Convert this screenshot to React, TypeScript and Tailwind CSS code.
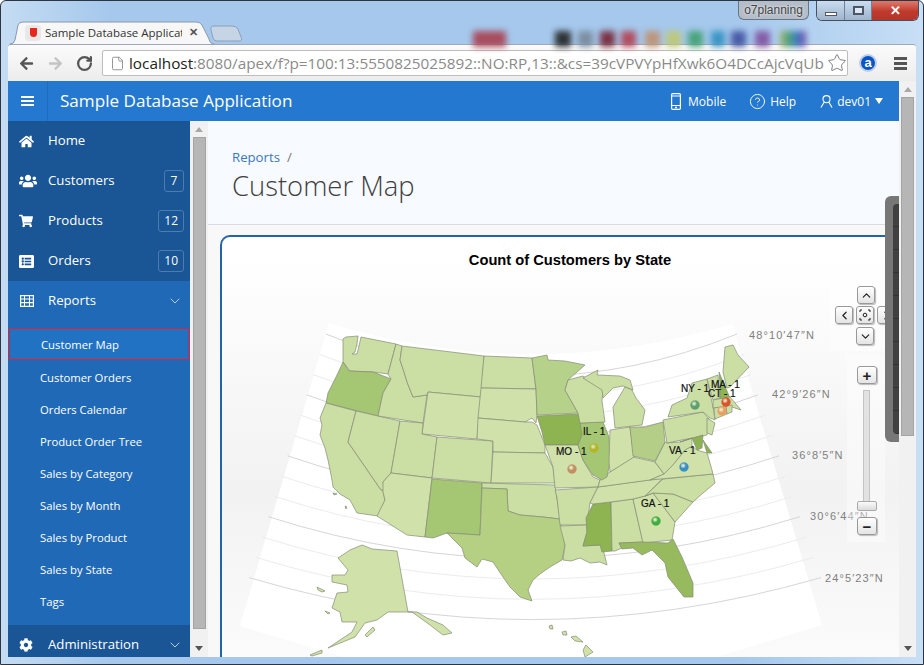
import React from "react";
import { ChevronDown, ChevronLeft, ChevronRight, ChevronUp, CircleHelp, File, RotateCw, Star } from "lucide-react";
import { FaArrowLeft, FaArrowRight, FaCog, FaHome, FaListAlt, FaShoppingCart, FaUsers } from "react-icons/fa";

const LIGHT = "#d0e1aa";
const PALE = "#cbdea3";
const MID = "#a5c673";
const DARK = "#8db451";

// map shapes, coordinates are taken straight from the page
const states: { p: string; f: string }[] = [
  { f: PALE, p: "343,339 346,337 358,336 357,344 355,352 352,354 357,354 359,346 361,337 396,344 388,374 373,372 350,371 343,362 343,353" },
  { f: MID, p: "343,362 349,371 373,372 391,379 383,393 378,416 326,403 328,393 337,375" },
  { f: PALE, p: "326,403 356,411 348,442 381,490 384,490 383,492 385,500 378,516 357,513 350,500 340,494 333,487 332,480 328,460 325,448 320,435 322,425 320,418" },
  { f: PALE, p: "356,411 400,421 391,473 383,482 384,490 381,490 348,442" },
  { f: PALE, p: "396,344 402,346 400,360 404,372 407,382 413,397 427,395 423,423 378,416 383,393 391,379 388,374" },
  { f: PALE, p: "402,346 484,356 481,397 428,392 427,395 413,397 407,382 404,372 400,360" },
  { f: LIGHT, p: "428,392 481,397 477,439 422,434" },
  { f: PALE, p: "400,421 423,423 422,434 437,437 432,478 391,473" },
  { f: PALE, p: "437,437 493,441 491,483 432,478" },
  { f: LIGHT, p: "391,473 432,478 425,537 407,535 377,516 385,500 383,492 383,482" },
  { f: MID, p: "432,479 482,483 480,535 447,533 433,538 425,537" },
  { f: PALE, p: "484,356 532,358 536,389 481,388" },
  { f: LIGHT, p: "481,388 536,389 537,415 536,423 532,418 525,422 478,418" },
  { f: LIGHT, p: "478,418 525,422 532,422 537,425 545,445 545,453 493,452 493,441 477,439" },
  { f: LIGHT, p: "493,452 545,453 553,467 555,483 491,483" },
  { f: PALE, p: "482,483 555,485 557,498 560,519 543,517 520,515 508,511 507,489 482,488" },
  { f: "#b5d083", p: "482,488 507,489 508,511 520,515 543,517 560,519 565,545 562,560 550,567 540,574 533,580 528,590 532,601 520,597 510,587 503,577 493,562 482,559 477,567 465,558 462,548 447,533 480,535" },
  { f: "#b6d18a", p: "532,358 547,355 548,360 565,361 585,365 568,380 565,390 578,413 537,415 536,389" },
  { f: DARK, p: "537,416 578,414 583,425 582,435 578,445 545,445 542,432" },
  { f: LIGHT, p: "545,445 578,445 583,460 593,477 600,480 598,487 555,488 553,467" },
  { f: PALE, p: "555,490 598,487 590,503 587,525 560,525 557,498" },
  { f: PALE, p: "560,526 587,525 587,532 583,546 602,545 604,553 607,565 600,562 590,563 580,558 571,561 563,560 565,545" },
  { f: DARK, p: "593,504 611,502 612,551 602,552 600,545 583,546 587,532 586,518" },
  { f: PALE, p: "611,502 633,499 643,542 619,543 622,548 615,551 612,551" },
  { f: LIGHT, p: "633,499 645,496 653,493 675,522 672,540 643,543" },
  { f: "#97ba5e", p: "619,543 643,542 668,543 673,539 682,557 693,583 693,597 684,597 668,577 665,563 652,550 642,555 633,548 622,549" },
  { f: PALE, p: "645,496 653,493 673,494 693,502 675,522 653,493" },
  { f: PALE, p: "663,479 713,474 715,483 703,493 693,502 673,494 653,493 645,496" },
  { f: LIGHT, p: "598,487 663,478 645,496 633,499 611,502 593,504 590,503" },
  { f: LIGHT, p: "600,480 610,472 633,457 655,462 664,474 650,480 598,487" },
  { f: LIGHT, p: "650,480 664,474 672,466 685,450 692,446 697,450 707,453 712,470 713,474" },
  { f: PALE, p: "655,462 665,442 667,443 680,442 692,438 692,446 685,450 672,466 664,474" },
  { f: MID, p: "580,423 603,422 609,437 610,462 607,477 602,480 593,475 583,460 578,445 582,435" },
  { f: PALE, p: "568,380 583,376 603,390 602,401 605,422 580,423 578,413 565,390" },
  { f: PALE, p: "583,378 598,370 597,375 620,376 630,380 633,390 623,386 613,388 603,398 602,390" },
  { f: PALE, p: "615,428 613,407 625,387 632,390 636,398 645,410 642,425" },
  { f: LIGHT, p: "610,430 630,427 634,457 610,472 609,462" },
  { f: "#b5ce87", p: "630,427 645,427 663,422 665,442 655,461 633,456" },
  { f: PALE, p: "663,420 703,412 710,420 707,435 667,443" },
  { f: PALE, p: "668,417 672,405 687,398 692,383 707,379 713,407 715,420 710,418 703,412" },
  { f: PALE, p: "707,418 715,423 712,435 707,433" },
  { f: PALE, p: "707,379 718,375 720,398 713,400" },
  { f: DARK, p: "719,372 730,398 720,399 720,383" },
  { f: PALE, p: "723,372 725,347 733,345 738,355 749,367 730,387 727,388" },
  { f: PALE, p: "713,400 730,397 741,410 732,407 713,408" },
  { f: PALE, p: "714,408 726,406 727,414 715,419" },
  { f: PALE, p: "726,406 732,405 732,412 727,414" },
  { f: DARK, p: "680,442 703,435 702,448 697,450 692,438" },
  { f: DARK, p: "703,440 712,453 707,453" },
  { f: LIGHT, p: "338,558 350,550 362,545 372,549 397,551 408,612 417,612 427,618 443,625 452,633 443,635 430,625 412,612 388,612 377,620 365,623 355,637 328,648 352,632 357,622 342,622 340,612 332,608 337,593 348,592 347,585 332,582 332,575 345,575 348,570" },
  { f: LIGHT, p: "365,635 373,627 375,630 367,637" },
  { f: LIGHT, p: "317,587 325,591 322,592 318,590" },
  { f: LIGHT, p: "325,611 330,613 328,614" },
  { f: LIGHT, p: "310,655 322,650 322,653 312,656" },
  { f: LIGHT, p: "583,650 586,645 593,652 585,657" },
  { f: LIGHT, p: "571,637 576,636 583,642 575,641" },
  { f: LIGHT, p: "562,632 566,631 567,635 563,635" },
  { f: LIGHT, p: "549,626 552,625 553,629 550,629" },
  { f: LIGHT, p: "333,493 337,494 334,495" },
  { f: LIGHT, p: "345,506 347,507 346,509" },
];

const markers = [
  { x: 695, y: 405, c: "#5f9e6e" },
  { x: 726, y: 402, c: "#d9542b" },
  { x: 722, y: 411, c: "#e8a060" },
  { x: 594, y: 448, c: "#b5b52a" },
  { x: 572, y: 469, c: "#c09060" },
  { x: 684, y: 467, c: "#3a8fc0" },
  { x: 656, y: 521, c: "#3fae3f" },
];

const stateLabels = [
  { x: 583, y: 435, t: "IL - 1" },
  { x: 556, y: 455, t: "MO - 1" },
  { x: 681, y: 392, t: "NY - 1" },
  { x: 711, y: 388, t: "MA - 1" },
  { x: 708, y: 397, t: "CT - 1" },
  { x: 669, y: 454, t: "VA - 1" },
  { x: 641, y: 507, t: "GA - 1" },
];

const latLabels = [
  { x: 749, y: 339, t: "48°10′47″N" },
  { x: 772, y: 398, t: "42°9′26″N" },
  { x: 792, y: 459, t: "36°8′5″N" },
  { x: 810, y: 520, t: "30°6′44″N" },
  { x: 825, y: 582, t: "24°5′23″N" },
];

const blobs = [
  "left-[465px] w-[33px] bg-[#a8404f]",
  "left-[547px] w-[16px] bg-[#222222]",
  "left-[570px] w-[15px] bg-[#778899]",
  "left-[592px] w-[15px] bg-[#772233]",
  "left-[613px] w-[15px] bg-[#b34050]",
  "left-[637px] w-[15px] bg-[#c09070]",
  "left-[658px] w-[15px] bg-[#c0c870]",
  "left-[680px] w-[15px] bg-[#40a070]",
  "left-[703px] w-[14px] bg-[#3090c0]",
  "left-[723px] w-[15px] bg-[#4050a0]",
  "left-[747px] w-[15px] bg-[#8050a0]",
  "left-[772px] w-[26px] bg-[linear-gradient(to_right,#b0b060,#40a070,#3070c0,#8040a0)]",
];

const mainNav = [
  { label: "Home", icon: <FaHome size={15} /> },
  { label: "Customers", icon: <FaUsers size={18} />, badge: "7" },
  { label: "Products", icon: <FaShoppingCart size={14} />, badge: "12" },
  { label: "Orders", icon: <FaListAlt size={15} />, badge: "10" },
];

const subNav = ["Customer Orders", "Orders Calendar", "Product Order Tree", "Sales by Category", "Sales by Month", "Sales by Product", "Sales by State", "Tags"];

function TabStrip() {
  return (
    <div className="relative h-[43px] shrink-0">
      {blobs.map((b) => (
        <div key={b} className={`absolute top-[30px] h-[16px] blur-[3px] opacity-90 ${b}`}></div>
      ))}
      <div className="absolute left-[2px] top-[19px] w-[236px] h-[25px]">
        <svg className="absolute inset-0" width="236" height="25" viewBox="0 0 236 25">
          <path d="M207 21 L229 21 Q233 21 231 17 L228 9 Q226 6 222 6 L204 6 Q200 6 201 10 L203 18 Q204 21 207 21 Z" fill="#c6d5e6" stroke="#8ba0b8" />
          <path d="M0 24 Q4 24 5 20 L8 5 Q9 2 13 2 L186 2 Q190 2 192 5 L199 19 Q200 24 204 24" fill="#f7f7f7" stroke="#8c98a8" />
        </svg>
        <div className="relative flex items-center h-[25px] pl-[15px]">
          <div className="w-4 h-4 bg-[#e8e8e8] rounded-sm flex items-center justify-center shrink-0">
            <div className="w-[7px] h-[9px] bg-[#e8281c] rounded-b-sm"></div>
          </div>
          <span className="ml-[4px] w-[137px] overflow-hidden whitespace-nowrap text-[11.5px] text-[#333] font-['Open_Sans',sans-serif]">Sample Database Applicat</span>
          <span className="ml-[7px] text-[11px] font-bold text-[#555] font-['Liberation_Sans',sans-serif]">✕</span>
        </div>
      </div>
    </div>
  );
}

function WindowButtons() {
  return (
    <div className="absolute right-[4px] top-0 flex items-start">
      <div className="w-[71px] h-[19px] mr-[7px] rounded-b-md border border-t-0 border-[#6b7684] bg-[#b4bdc8] flex items-center justify-center text-[12px] text-[#444] font-['Liberation_Sans',sans-serif] [text-shadow:0_0_3px_#fff]">o7planning</div>
      <div className="flex h-[20px] rounded-b-md border border-t-0 border-[#47505c] overflow-hidden">
        <div className="w-[28px] bg-[linear-gradient(#c9dcf0,#9fb5cc)] flex items-center justify-center border-r border-[#6f8196]">
          <div className="w-[12px] h-[4px] mt-[6px] bg-white border border-[#556]"></div>
        </div>
        <div className="w-[27px] bg-[linear-gradient(#c9dcf0,#9fb5cc)] flex items-center justify-center border-r border-[#6f8196]">
          <div className="w-[11px] h-[9px] border-2 border-[#4a5566] bg-[#dde8f4]"></div>
        </div>
        <div className="w-[46px] bg-[linear-gradient(#dd7a6e,#c03a2c_55%,#b3352a)] flex items-center justify-center text-white text-[13px] font-bold font-['Liberation_Sans',sans-serif]">✕</div>
      </div>
    </div>
  );
}

function Toolbar() {
  return (
    <div className="h-[37px] shrink-0 flex items-center bg-[linear-gradient(#fbfbfb,#ececec)] border-t border-[#9fa9b5] rounded-t-[3px]">
      <FaArrowLeft size={15} className="ml-[11px] text-[#555]" />
      <FaArrowRight size={15} className="ml-[14px] text-[#c4c4c4]" />
      <RotateCw size={17} strokeWidth={3.2} className="ml-[13px] text-[#555]" />
      <div className="ml-[9px] w-[746px] h-[26px] bg-white border border-[#bdbdbd] rounded-[2px] flex items-center pl-[7px] overflow-hidden">
        <File size={15} strokeWidth={1.4} className="text-[#888] shrink-0" />
        <span className="ml-[4px] w-[697px] overflow-hidden whitespace-nowrap text-[15.3px] text-[#8a8a8a] font-['Open_Sans',sans-serif]">
          <span className="text-[#222]">localhost</span>:8080/apex/f?p=100:13:5550825025892::NO:RP,13::&amp;cs=39cVPVYpHfXwk6O4DCcAjcVqUb
        </span>
        <Star size={20} strokeWidth={1} className="ml-[2px] text-[#666] shrink-0" />
      </div>
      <div className="ml-[11px] w-[18px] h-[18px] rounded-full bg-[#0b55c4] border-2 border-[#bcd0ee] flex items-center justify-center text-white text-[13px] leading-none font-bold font-['Liberation_Sans',sans-serif] pb-[2px]">a</div>
      <div className="ml-[17px] w-[13px] flex flex-col gap-[2px]">
        <div className="h-[3px] bg-[#555]"></div>
        <div className="h-[3px] bg-[#555]"></div>
        <div className="h-[3px] bg-[#555]"></div>
      </div>
    </div>
  );
}

function Header() {
  return (
    <div className="h-10 shrink-0 bg-[#2478d0] text-white flex items-center font-['Open_Sans',sans-serif]">
      <div className="w-[40px] h-full flex flex-col items-center justify-center gap-[2px] border-r border-[#1f6cbd]">
        <div className="w-[13px] h-[2px] bg-white"></div>
        <div className="w-[13px] h-[2px] bg-white"></div>
        <div className="w-[13px] h-[2px] bg-white"></div>
      </div>
      <span className="ml-[12px] text-[17.1px]">Sample Database Application</span>
      <div className="ml-auto flex items-center text-[12px] mr-[16px]">
        <svg width="10" height="17" viewBox="0 0 10 17" fill="none" stroke="#fff" strokeWidth="1.2">
          <rect x="0.6" y="0.6" width="8.8" height="15.8" rx="1.2" />
          <path d="M0.6 3 H9.4 M0.6 12.5 H9.4 M5 13.5 V15.5 M4 14.5 H6" />
        </svg>
        <span className="ml-[7px] pt-[2px]">Mobile</span>
        <CircleHelp size={17} strokeWidth={1.3} className="ml-[23px]" />
        <span className="ml-[4px] pt-[2px]">Help</span>
        <svg className="ml-[24px]" width="13" height="15" viewBox="0 0 14 15" fill="none" stroke="#fff" strokeWidth="1.2">
          <circle cx="7" cy="5" r="3.8" />
          <path d="M4.6 8 L1 14 M9.4 8 L13 14" />
        </svg>
        <span className="ml-[4px] pt-[2px]">dev01</span>
        <div className="ml-[4px] w-0 h-0 border-l-[4px] border-r-[4px] border-t-[6px] border-l-transparent border-r-transparent border-t-white"></div>
      </div>
    </div>
  );
}

function GridIcon() {
  return (
    <svg width="14" height="12" viewBox="0 0 14 12" fill="#fff">
      <path fillRule="evenodd" d="M0 0 H14 V12 H0 Z M1.2 1.2 V3.4 H4 V1.2 Z M5 1.2 V3.4 H9 V1.2 Z M10 1.2 V3.4 H12.8 V1.2 Z M1.2 4.6 V7 H4 V4.6 Z M5 4.6 V7 H9 V4.6 Z M10 4.6 V7 H12.8 V4.6 Z M1.2 8.2 V10.8 H4 V8.2 Z M5 8.2 V10.8 H9 V8.2 Z M10 8.2 V10.8 H12.8 V8.2 Z" />
    </svg>
  );
}

function Sidebar() {
  return (
    <div className="w-[182px] shrink-0 flex flex-col bg-[#2069b6] text-white overflow-hidden font-['Open_Sans',sans-serif]">
      {mainNav.map((n) => (
        <div key={n.label} className="h-10 shrink-0 bg-[#1a5595] flex items-center text-[13.2px]">
          <div className="w-[40px] pl-[11px] shrink-0">{n.icon}</div>
          <span>{n.label}</span>
          {n.badge && (
            <span className="ml-auto mr-[6px] h-[22px] min-w-[20px] px-[5px] rounded-[3px] border border-[#4d7cae] flex items-center justify-center text-[12px] font-medium">{n.badge}</span>
          )}
        </div>
      ))}
      <div className="h-10 shrink-0 flex items-center text-[13.2px]">
        <div className="w-[40px] pl-[12px] shrink-0">
          <GridIcon />
        </div>
        <span>Reports</span>
        <ChevronDown size={16} strokeWidth={1.5} className="ml-auto mr-[7px] text-[#b8cfe8]" />
      </div>
      <div className="h-[7px] shrink-0"></div>
      <div className="h-8 shrink-0 mx-[1px] pt-[2px] bg-[#2272c4] border border-[#e8202c] flex items-center pl-[31px] text-[11.3px] font-medium">Customer Map</div>
      <div className="h-[2px] shrink-0"></div>
      {subNav.map((s) => (
        <div key={s} className="h-8 shrink-0 flex items-center pl-[32px] text-[11.3px] font-medium">{s}</div>
      ))}
      <div className="mt-[7px] h-10 shrink-0 bg-[#1a5595] flex items-center text-[13.2px]">
        <div className="w-[40px] pl-[11px] shrink-0">
          <FaCog size={14} />
        </div>
        <span>Administration</span>
        <ChevronDown size={16} strokeWidth={1.5} className="ml-auto mr-[7px] text-[#b8cfe8]" />
      </div>
    </div>
  );
}

function ScrollBar({ thumb }: { thumb: string }) {
  return (
    <div className="flex-1 flex flex-col items-center bg-[#f1f1f1]">
      <div className="mt-[6px] w-0 h-0 border-l-[4px] border-r-[4px] border-b-[5px] border-l-transparent border-r-transparent border-b-[#a8a8a8]"></div>
      <div className={`mt-[5px] w-[13px] bg-[#b6b6b6] border border-[#a4a4a4] ${thumb}`}></div>
      <div className="mt-auto mb-[6px] w-0 h-0 border-l-[4px] border-r-[4px] border-t-[5px] border-l-transparent border-r-transparent border-t-[#555]"></div>
    </div>
  );
}

function CtrlButton({ className, children }: { className: string; children?: React.ReactNode }) {
  return (
    <div className={`absolute w-[18px] h-[18px] rounded-[3px] border border-[#999] bg-[linear-gradient(#ffffff,#e4e4e4)] shadow-[1px_1px_1px_#bbb] flex items-center justify-center text-[#222] font-['Liberation_Sans',sans-serif] font-bold leading-none ${className}`}>
      {children}
    </div>
  );
}

function MapChart() {
  const lines = Array.from({ length: 13 }, (_, i) => {
    const x0 = 326 - i * 6.4;
    const y0 = 334 + i * 20.3;
    const x1 = 737 + i * 7;
    const y1 = 334 + i * 20.3;
    return { d: `M${x0} ${y0} Q530 ${y0 + 84} ${x1} ${y1}`, strong: i % 3 === 0 };
  });

  return (
    <div className="relative flex-1 min-h-0">
      <svg className="block" width="677" height="382" viewBox="222 275 677 382">
        <defs>
          {markers.map((m, i) => (
            <radialGradient key={i} id={`mk${i}`} cx="40%" cy="35%" r="70%">
              <stop offset="0%" stopColor="#ffffff" stopOpacity="0.6" />
              <stop offset="45%" stopColor={m.c} />
              <stop offset="100%" stopColor={m.c} />
            </radialGradient>
          ))}
        </defs>
        <path d="M329 323 Q530 385 732 324 L822 625 L707 660 L353 660 L240 626 Z" fill="#fff" />
        {lines.map((l, i) => (
          <path key={i} d={l.d} fill="none" stroke={l.strong ? "#d6d6d6" : "#ececec"} strokeWidth="1" />
        ))}
        {states.map((s, i) => (
          <polygon key={i} points={s.p} fill={s.f} stroke="#848c76" strokeWidth="0.7" strokeLinejoin="round" />
        ))}
        {markers.map((m, i) => (
          <circle key={i} cx={m.x} cy={m.y} r="4.5" fill={`url(#mk${i})`} stroke={m.c} strokeOpacity="0.6" strokeWidth="0.5" />
        ))}
        {stateLabels.map((l) => (
          <text key={l.t} x={l.x} y={l.y} fontSize="10" fill="#111" stroke="#111" strokeWidth="0.2" fontFamily="Liberation Sans, sans-serif">{l.t}</text>
        ))}
        {latLabels.map((l) => (
          <text key={l.t} x={l.x} y={l.y} fontSize="11" fill="#808080" letterSpacing="1.1" fontFamily="Liberation Sans, sans-serif">{l.t}</text>
        ))}
      </svg>

      {/* pan and zoom controls sit over the map */}
      <div className="absolute left-[608px] top-[10px] w-[55px] h-[66px] bg-white/40"></div>
      <div className="absolute left-[625px] top-[80px] w-[38px] h-[187px] bg-white/40"></div>
      <CtrlButton className="left-[635px] top-[11px]"><ChevronUp size={13} strokeWidth={2.2} /></CtrlButton>
      <CtrlButton className="left-[613px] top-[31px]"><ChevronLeft size={13} strokeWidth={2.2} /></CtrlButton>
      <CtrlButton className="left-[634px] top-[31px]">
        <svg width="12" height="12" viewBox="0 0 12 12" fill="none" stroke="#222" strokeWidth="1">
          <path d="M1 3 V1 H3 M9 1 H11 V3 M11 9 V11 H9 M3 11 H1 V9" />
          <circle cx="6" cy="6" r="1.8" />
        </svg>
      </CtrlButton>
      <CtrlButton className="left-[655px] top-[31px]"><ChevronRight size={13} strokeWidth={2.2} /></CtrlButton>
      <CtrlButton className="left-[634px] top-[52px]"><ChevronDown size={13} strokeWidth={2.2} /></CtrlButton>
      <CtrlButton className="left-[635px] top-[91px] w-[20px] text-[15px]">+</CtrlButton>
      <div className="absolute left-[641px] top-[115px] w-[7px] h-[112px] border border-[#c4c4c4] bg-[#e2e2e2]"></div>
      <div className="absolute left-[635px] top-[226px] w-[20px] h-[10px] rounded-[2px] border border-[#aaa] bg-[linear-gradient(#fafafa,#dcdcdc)]"></div>
      <CtrlButton className="left-[635px] top-[242px] w-[20px] text-[15px]">−</CtrlButton>
    </div>
  );
}

function Main() {
  return (
    <div className="relative flex-1 min-w-0 flex flex-col bg-[#f8f8f8] overflow-hidden font-['Open_Sans',sans-serif]">
      <div className="h-[104px] shrink-0 bg-[#f7faff] border-b border-[#d8dbe0] pl-[24px] pt-[27px]">
        <div className="h-5 flex items-center text-[13.2px] leading-none">
          <span className="text-[#3a78bd]">Reports</span>
          <span className="ml-[7px] text-[#777]">/</span>
        </div>
        <h1 className="text-[27.4px] leading-[36px] font-light text-[#404040]">Customer Map</h1>
      </div>
      <div className="flex-1 min-h-0 pl-[12px] pt-[10px]">
        <div className="w-[700px] h-full flex flex-col rounded-tl-[10px] border-l-2 border-t-2 border-[#2263ae] bg-[linear-gradient(#ffffff_5%,#f2f2f2_60%,#fbfbfb)]">
          <div className="h-[38px] shrink-0 pt-[13px] w-[696px] text-center text-[14.7px] leading-5 font-bold text-black font-['Liberation_Sans',sans-serif]">Count of Customers by State</div>
          <MapChart />
        </div>
      </div>
      {/* grey side tab lying over the page */}
      <div className="absolute right-0 top-[75px] w-[14px] h-[246px] rounded-l-md bg-[#777] flex justify-end items-center">
        <div className="w-[6px] h-[230px] rounded-l-sm bg-[repeating-linear-gradient(#404040_0,#404040_22px,#333_22px,#333_23px)]"></div>
      </div>
    </div>
  );
}

export default function App() {
  return (
    <div className="relative w-[924px] h-[665px] overflow-hidden rounded-t-[6px] border border-[#2c3642] bg-[linear-gradient(to_right,#c5dcf3,#a5c8ec_12%,#a5c8ec_80%,#c8dff6)] flex flex-col px-[7px] pb-[7px]">
      <TabStrip />
      <WindowButtons />
      <Toolbar />
      <div className="flex-1 min-h-0 flex">
        <div className="flex-1 min-w-0 flex flex-col">
          <Header />
          <div className="flex-1 min-h-0 flex">
            <Sidebar />
            <div className="w-[18px] shrink-0 flex flex-col">
              <ScrollBar thumb="h-[492px]" />
            </div>
            <Main />
          </div>
        </div>
        <div className="w-[17px] shrink-0 flex flex-col">
          <ScrollBar thumb="h-[339px]" />
        </div>
      </div>
    </div>
  );
}
